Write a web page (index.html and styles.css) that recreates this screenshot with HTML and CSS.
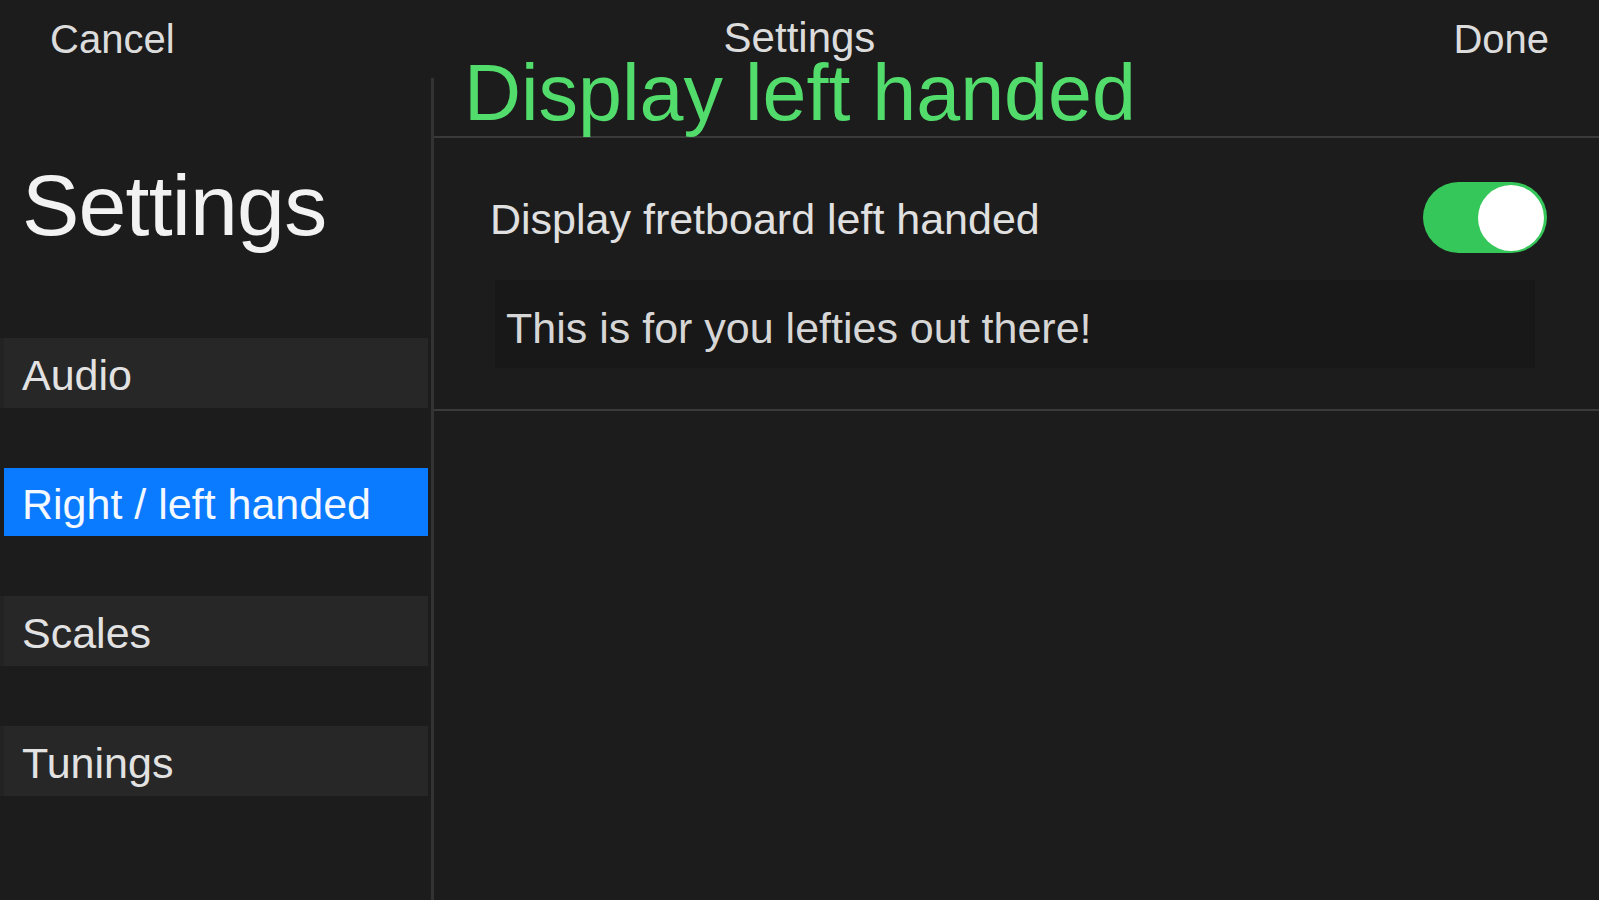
FILE: index.html
```html
<!DOCTYPE html>
<html>
<head>
    <link rel="stylesheet" href="styles.css">
</head>
<body>
    <div class="nav-bar">
        <span class="nav-button">Cancel</span>
        <span class="nav-title">Settings</span>
        <span class="nav-button done">Done</span>
    </div>

    <div class="split">
        <div class="sidebar">
            <h1 class="sidebar-title">Settings</h1>
            <ul class="menu">
                <li class="menu-item">Audio</li>
                <li class="menu-item selected">Right / left handed</li>
                <li class="menu-item">Scales</li>
                <li class="menu-item">Tunings</li>
            </ul>
        </div>

        <div class="detail">
            <div class="detail-header">
                <h2 class="detail-title">Display left handed</h2>
            </div>
            <div class="section">
                <div class="toggle-row">
                    <span class="toggle-label">Display fretboard left handed</span>
                    <div class="switch on">
                        <div class="knob"></div>
                    </div>
                </div>
                <div class="note">This is for you lefties out there!</div>
            </div>
        </div>
    </div>
</body>
</html>
```

FILE: styles.css
```css
body {
    background-color: #1c1c1c;
    color: #e2e2e2;
    font-family: "Liberation Sans", Arial, sans-serif;
    margin: 0px;
    height: 900px;
    overflow: hidden;
}
.nav-bar {
    height: 78px;
    display: grid;
    grid-template-columns: 1fr auto 1fr;
    align-items: center;
    padding: 0 50px 0 50px;
    font-size: 40px;
    color: #dcdcdc;
}
.nav-title {
    font-size: 42px;
    padding-bottom: 2px;
}
.done {
    justify-self: end;
}
.split {
    display: flex;
    height: 822px;
}
.sidebar {
    width: 431px;
    border-right: 3px solid #333333;
}
.sidebar-title {
    font-size: 86px;
    font-weight: normal;
    letter-spacing: -0.8px;
    line-height: 86px;
    margin: 84px 0 0 22px;
    color: #f2f2f2;
}
.menu {
    list-style: none;
    margin: 90px 3px 0 0;
    padding: 0;
    display: flex;
    flex-direction: column;
    gap: 60px;
}
.menu-item {
    height: 70px;
    box-sizing: border-box;
    display: flex;
    align-items: center;
    padding: 5px 0 0 18px;
    font-size: 43px;
    background-color: #272727;
    border-left: 4px solid #232323;
}
.menu-item.selected {
    background-color: #0a7bff;
    border-left-color: #1c1c1c;
    color: #f4f8ff;
    height: 68px;
}
.detail {
    flex: 1;
}
.detail-header {
    height: 60px;
    box-sizing: border-box;
    display: flex;
    flex-direction: column;
    justify-content: flex-end;
    padding: 0 0 5px 30px;
    border-bottom: 2px solid #3a3a3a;
}
.detail-title {
    margin: 0;
    font-size: 79px;
    font-weight: normal;
    line-height: 76px;
    color: #52dc6c;
}
.section {
    padding: 44px 52px 41px 56px;
    border-bottom: 2px solid #3a3a3a;
}
.toggle-row {
    display: flex;
    justify-content: space-between;
    align-items: center;
    height: 71px;
}
.toggle-label {
    font-size: 43px;
    color: #e0e0e0;
    padding-top: 4px;
}
.switch {
    width: 124px;
    height: 71px;
    border-radius: 36px;
    background-color: #35c759;
    display: flex;
    align-items: center;
    justify-content: flex-end;
    padding: 0 3px;
    box-sizing: border-box;
}
.knob {
    width: 66px;
    height: 66px;
    border-radius: 50%;
    background-color: #ffffff;
}
.note {
    margin: 27px 12px 0 5px;
    height: 88px;
    box-sizing: border-box;
    display: flex;
    align-items: center;
    padding: 9px 0 0 11px;
    background-color: #181818;
    font-size: 43px;
    color: #d6d6d6;
}
```
